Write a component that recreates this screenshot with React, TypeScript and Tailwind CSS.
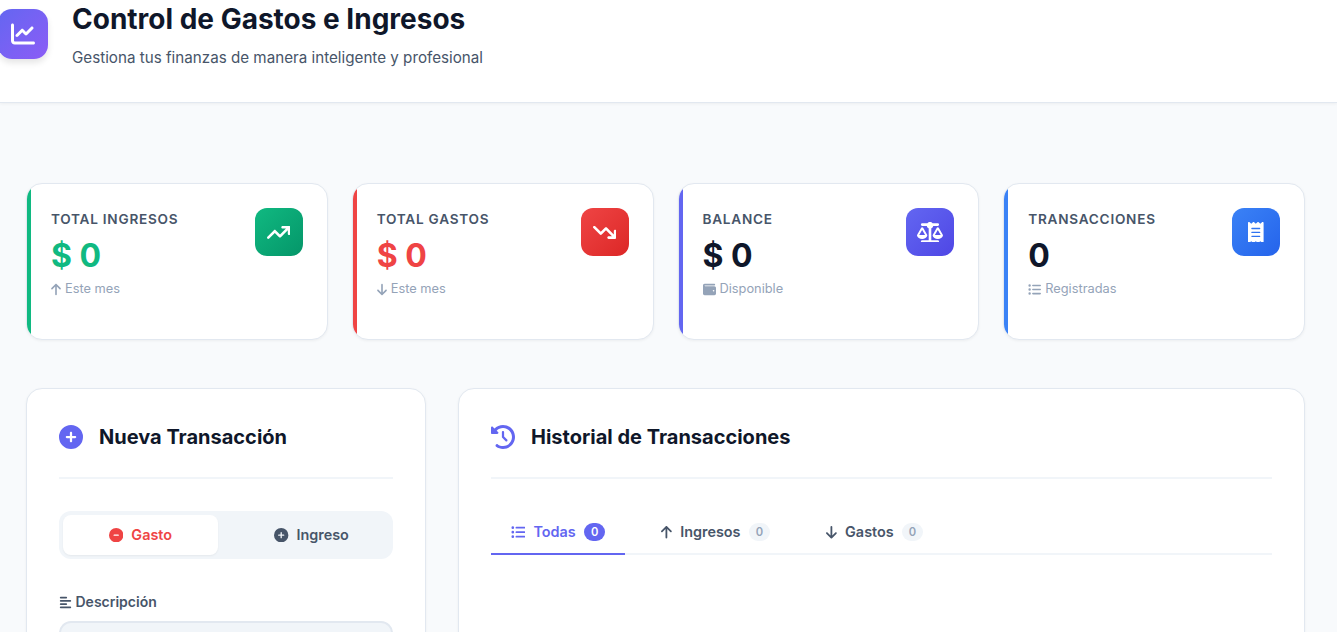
import type { ReactNode } from "react";
import {
  FaAlignLeft,
  FaArrowDown,
  FaArrowTrendDown,
  FaArrowTrendUp,
  FaArrowUp,
  FaChartLine,
  FaCircleMinus,
  FaCirclePlus,
  FaClockRotateLeft,
  FaListUl,
  FaReceipt,
  FaScaleBalanced,
  FaWallet,
} from "react-icons/fa6";

interface StatCardProps {
  label: string;
  value: string;
  valueClass: string;
  barClass: string;
  iconClass: string;
  icon: ReactNode;
  subIcon: ReactNode;
  sub: string;
}

function StatCard(props: StatCardProps) {
  return (
    <div className="relative h-[157px] overflow-hidden rounded-2xl border border-[#e2e8f0] bg-white p-6 shadow-[0_1px_3px_rgba(0,0,0,0.05)]">
      <div className={`absolute top-0 bottom-0 left-0 w-1 ${props.barClass}`}></div>
      <div className="flex items-start justify-between">
        <div>
          <div className="mt-[2px] text-[13.6px] leading-[18px] font-semibold tracking-[0.75px] text-[#475569]">{props.label}</div>
          <div className={`mt-[8px] text-[32px] leading-[40px] font-bold ${props.valueClass}`}>{props.value}</div>
          <div className="mt-[3px] flex items-center gap-1 text-[12.8px] leading-[20px] text-[#94a3b8]">
            {props.subIcon}
            <span>{props.sub}</span>
          </div>
        </div>
        <div className={`flex h-12 w-12 items-center justify-center rounded-xl text-white ${props.iconClass}`}>{props.icon}</div>
      </div>
    </div>
  );
}

function Tab(props: { icon: ReactNode; label: string; active?: boolean }) {
  return (
    <div
      className={`-mb-[2px] flex h-[44px] items-center gap-2 border-b-2 px-5 text-[14.4px] font-semibold ${
        props.active ? "border-[#6366f1] text-[#6366f1]" : "border-transparent text-[#475569]"
      }`}
    >
      {props.icon}
      <span>{props.label}</span>
      <span
        className={`flex h-[18px] items-center justify-center rounded-full px-[7.2px] text-[11.2px] font-semibold ${
          props.active ? "bg-[#6366f1] text-white" : "bg-[#f1f5f9] text-[#94a3b8]"
        }`}
      >
        0
      </span>
    </div>
  );
}

export default function App() {
  return (
    <div className="h-[632px] overflow-hidden bg-[#f8fafc] font-['Inter',sans-serif]">
      <header className="h-[103px] border-b border-[#e2e8f0] bg-white shadow-[0_1px_3px_rgba(0,0,0,0.05)]">
        <div className="-ml-[2px] flex items-start gap-6">
          <div className="mt-[9px] flex h-[50px] w-[50px] items-center justify-center rounded-[14px] bg-gradient-to-br from-[#6366f1] to-[#8b5cf6] text-white shadow-[0_4px_6px_rgba(0,0,0,0.1)]">
            <FaChartLine className="h-6 w-6" />
          </div>
          <div>
            <h1 className="text-[28px] leading-[38px] font-bold text-[#0f172a]">Control de Gastos e Ingresos</h1>
            <p className="mt-[10px] text-[15.2px] leading-[20px] text-[#475569]">Gestiona tus finanzas de manera inteligente y profesional</p>
          </div>
        </div>
      </header>

      <main className="pt-20 pr-8 pl-[26px]">
        <div className="grid grid-cols-4 gap-6">
          <StatCard
            label="TOTAL INGRESOS"
            value="$ 0"
            valueClass="text-[#10b981]"
            barClass="bg-[#10b981]"
            iconClass="bg-gradient-to-br from-[#10b981] to-[#059669]"
            icon={<FaArrowTrendUp className="h-[20.8px] w-[23.4px]" />}
            subIcon={<FaArrowUp className="h-[13px] w-[10px]" />}
            sub="Este mes"
          />
          <StatCard
            label="TOTAL GASTOS"
            value="$ 0"
            valueClass="text-[#ef4444]"
            barClass="bg-[#ef4444]"
            iconClass="bg-gradient-to-br from-[#ef4444] to-[#dc2626]"
            icon={<FaArrowTrendDown className="h-[20.8px] w-[23.4px]" />}
            subIcon={<FaArrowDown className="h-[13px] w-[10px]" />}
            sub="Este mes"
          />
          <StatCard
            label="BALANCE"
            value="$ 0"
            valueClass="text-[#0f172a]"
            barClass="bg-[#6366f1]"
            iconClass="bg-gradient-to-br from-[#6366f1] to-[#4f46e5]"
            icon={<FaScaleBalanced className="h-[20.8px] w-[26px]" />}
            subIcon={<FaWallet className="h-[13px] w-[13px]" />}
            sub="Disponible"
          />
          <StatCard
            label="TRANSACCIONES"
            value="0"
            valueClass="text-[#0f172a]"
            barClass="bg-[#3b82f6]"
            iconClass="bg-gradient-to-br from-[#3b82f6] to-[#2563eb]"
            icon={<FaReceipt className="h-[20.8px] w-[15.6px]" />}
            subIcon={<FaListUl className="h-[13px] w-[13px]" />}
            sub="Registradas"
          />
        </div>

        <div className="mt-12 grid grid-cols-[400px_1fr] gap-8">
          <section className="h-[500px] rounded-2xl border border-[#e2e8f0] bg-white px-8 pt-[31px] shadow-[0_1px_3px_rgba(0,0,0,0.05)]">
            <div className="flex h-[59px] items-start gap-4 border-b-2 border-[#f1f5f9] pt-[5px] pb-4">
              <FaCirclePlus className="h-6 w-6 text-[#6366f1]" />
              <h2 className="text-[20px] leading-[24px] font-bold text-[#0f172a]">Nueva Transacción</h2>
            </div>
            <div className="mt-8 grid h-12 grid-cols-2 gap-4 rounded-xl bg-[#f1f5f9] p-1">
              <div className="flex items-center justify-center gap-2 rounded-lg bg-white text-[14.4px] font-semibold text-[#ef4444] shadow-[0_1px_2px_rgba(0,0,0,0.05)]">
                <FaCircleMinus className="h-[14.4px] w-[14.4px]" />
                <span>Gasto</span>
              </div>
              <div className="flex items-center justify-center gap-2 text-[14.4px] font-semibold text-[#475569]">
                <FaCirclePlus className="h-[14.4px] w-[14.4px]" />
                <span>Ingreso</span>
              </div>
            </div>
            <div className="mt-8 flex items-center gap-[3.5px] text-[14px] leading-[22px] font-semibold text-[#475569]">
              <FaAlignLeft className="h-[13px] w-[13px]" />
              <span>Descripción</span>
            </div>
            <div className="mt-2 h-12 rounded-xl border-2 border-[#e2e8f0] bg-[#f1f5f9]"></div>
          </section>

          <section className="h-[500px] rounded-2xl border border-[#e2e8f0] bg-white px-8 pt-[31px] shadow-[0_1px_3px_rgba(0,0,0,0.05)]">
            <div className="flex h-[59px] items-start gap-4 border-b-2 border-[#f1f5f9] pt-[5px] pb-4">
              <FaClockRotateLeft className="h-6 w-6 text-[#6366f1]" />
              <h2 className="text-[20px] leading-[24px] font-bold text-[#0f172a]">Historial de Transacciones</h2>
            </div>
            <div className="mt-8 flex gap-4 border-b-2 border-[#f1f5f9]">
              <Tab active icon={<FaListUl className="h-[14.4px] w-[14.4px]" />} label="Todas" />
              <Tab icon={<FaArrowUp className="h-[14.4px] w-[10.8px]" />} label="Ingresos" />
              <Tab icon={<FaArrowDown className="h-[14.4px] w-[10.8px]" />} label="Gastos" />
            </div>
          </section>
        </div>
      </main>
    </div>
  );
}
